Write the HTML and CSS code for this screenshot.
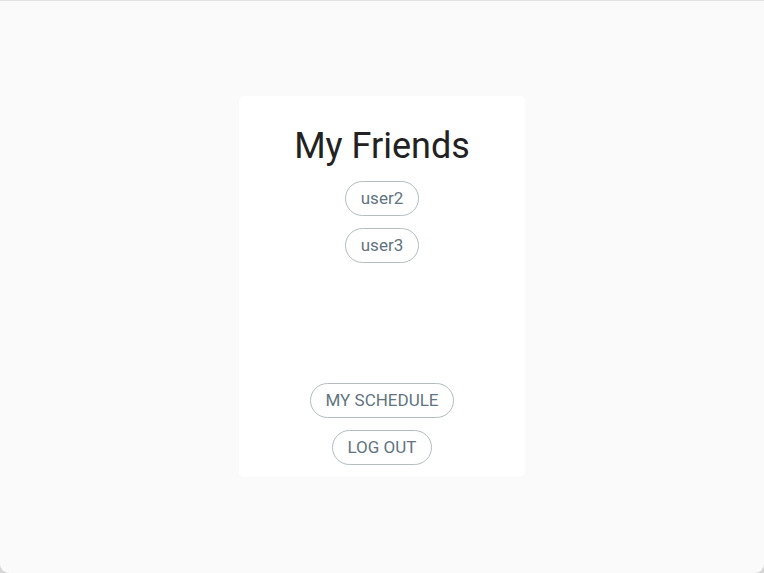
FILE: index.html
```html
<!DOCTYPE html>
<html lang="en">
<head>
<meta charset="utf-8">
<title>My Friends</title>
<link rel="stylesheet" href="styles.css">
</head>
<body>
<main class="screen">
  <section class="card">
    <div class="top">
      <h1 class="title">My Friends</h1>
      <ul class="friends">
        <li><button class="pill">user2</button></li>
        <li><button class="pill">user3</button></li>
      </ul>
    </div>
    <div class="actions">
      <button class="pill upper">My Schedule</button>
      <button class="pill upper">Log Out</button>
    </div>
  </section>
</main>
</body>
</html>
```
FILE: styles.css
```css
html {
  margin: 0;
  height: 100%;
  background: #d6d6d6;
}
body {
  margin: 0;
  height: 100%;
  font-family: Roboto, "Liberation Sans", sans-serif;
}
.screen {
  box-sizing: border-box;
  height: 100%;
  background: #fafafa;
  border-top: 1px solid #e2e2e2;
  border-radius: 0 0 9px 9px;
  display: flex;
  align-items: center;
  justify-content: center;
}
.card {
  box-sizing: border-box;
  width: 286px;
  height: 381px;
  margin-top: -1px;
  background: #ffffff;
  border-radius: 5px;
  padding: 24px 0 12px;
  display: flex;
  flex-direction: column;
  justify-content: space-between;
  align-items: center;
}
.top {
  display: flex;
  flex-direction: column;
  align-items: center;
}
.title {
  margin: 0;
  font-size: 36px;
  font-weight: 400;
  line-height: 52px;
  color: #222222;
}
.friends {
  list-style: none;
  margin: 9px 0 0;
  padding: 0;
  display: flex;
  flex-direction: column;
  align-items: center;
  gap: 12px;
}
.actions {
  display: flex;
  flex-direction: column;
  align-items: center;
  gap: 12px;
}
.pill {
  box-sizing: border-box;
  height: 35px;
  padding: 0 15px;
  border: 1px solid #b4bcc0;
  border-radius: 18px;
  background: #ffffff;
  color: #5f7480;
  font-family: Roboto, "Liberation Sans", sans-serif;
  font-size: 17px;
  line-height: 33px;
}
.upper {
  text-transform: uppercase;
}
```
